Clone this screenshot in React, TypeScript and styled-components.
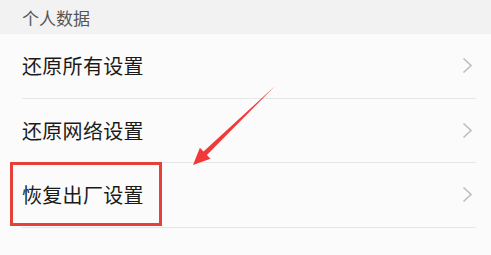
import React from 'react';
import styled, { createGlobalStyle } from 'styled-components';

const GlobalStyle = createGlobalStyle`
  html, body {
    margin: 0;
    padding: 0;
    background: #fbfbfb;
  }
  body {
    font-family: "Noto Sans CJK SC", "Noto Sans", sans-serif;
  }
`;

const Page = styled.div`
  position: relative;
  width: 491px;
  height: 255px;
  background: #fbfbfb;
  overflow: hidden;
`;

const SectionHeader = styled.div`
  height: 34px;
  background: #f2f2f2;
  display: flex;
  align-items: center;
  padding-left: 22px;
  font-size: 17px;
  color: #555;
`;

const List = styled.div`
  display: flex;
  flex-direction: column;
`;

const Row = styled.div`
  position: relative;
  height: 64.5px;
  margin: 0 15px 0 22px;
  display: flex;
  align-items: center;
  justify-content: space-between;
  border-bottom: 1px solid #e6e6e6;
  box-sizing: border-box;
`;

const Label = styled.span`
  font-size: 20px;
  color: #1a1a1a;
  letter-spacing: 0.3px;
`;

const Chevron = styled.svg`
  width: 11px;
  height: 17px;
  margin-right: 3px;
`;

const Highlight = styled.div`
  position: absolute;
  left: -12px;
  top: -1px;
  width: 152px;
  height: 64px;
  border: 3px solid #e6403b;
  box-sizing: border-box;
`;

const Arrow = styled.svg`
  position: absolute;
  left: 0;
  top: 0;
  pointer-events: none;
`;

const items = ['还原所有设置', '还原网络设置', '恢复出厂设置'];

const App = () => {
  return (
    <>
      <GlobalStyle />
      <Page>
        <SectionHeader>个人数据</SectionHeader>
        <List>
          {items.map((text, i) => (
            <Row key={text}>
              {i === 2 && <Highlight />}
              <Label>{text}</Label>
              <Chevron viewBox="0 0 11 17">
                <path d="M1.5 1.5 L9 8.5 L1.5 15.5" fill="none" stroke="#bdbdbd" strokeWidth="1.6" />
              </Chevron>
            </Row>
          ))}
        </List>
        <Arrow width="491" height="255" viewBox="0 0 491 255">
          <polygon
            points="275,86 206.9,155.1 210.5,158.8 193,165 199.9,147.8 203.5,151.5"
            fill="#f03a3a"
          />
        </Arrow>
      </Page>
    </>
  );
};

export default App;
